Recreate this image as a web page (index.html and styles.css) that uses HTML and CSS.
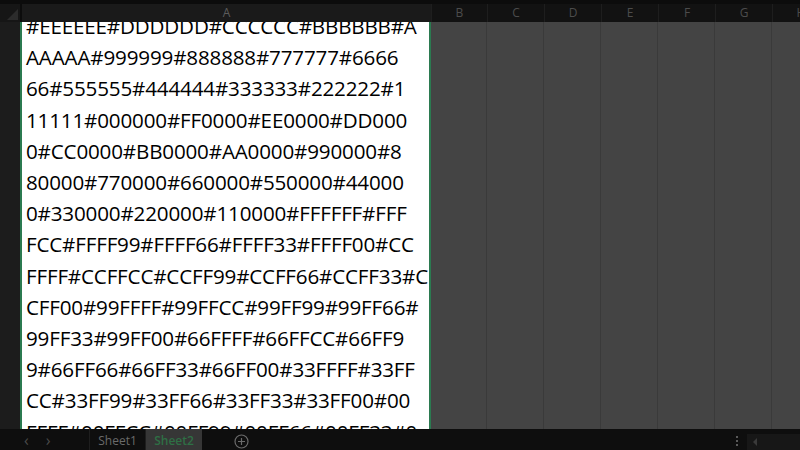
FILE: index.html
```html
<!DOCTYPE html>
<html>
<head>
    <title>Sheet2</title>
    <meta charset="utf-8"/>
    <link rel="stylesheet" href="styles.css">
</head>
<body>
    <div class="sheet">
        <div class="top-strip"></div>

        <div class="col-heads">
            <div class="corner"><span class="corner-tri"></span></div>
            <div class="col-head col-a">A</div>
            <div class="col-head">B</div>
            <div class="col-head">C</div>
            <div class="col-head">D</div>
            <div class="col-head">E</div>
            <div class="col-head">F</div>
            <div class="col-head">G</div>
            <div class="col-head">H</div>
        </div>

        <div class="grid-body">
            <div class="row-heads"></div>
            <div class="cell-a">
                <div class="cell-text">
                    <div class="line">#EEEEEE#DDDDDD#CCCCCC#BBBBBB#A</div>
                    <div class="line">AAAAA#999999#888888#777777#6666</div>
                    <div class="line">66#555555#444444#333333#222222#1</div>
                    <div class="line">11111#000000#FF0000#EE0000#DD000</div>
                    <div class="line">0#CC0000#BB0000#AA0000#990000#8</div>
                    <div class="line">80000#770000#660000#550000#44000</div>
                    <div class="line">0#330000#220000#110000#FFFFFF#FFF</div>
                    <div class="line">FCC#FFFF99#FFFF66#FFFF33#FFFF00#CC</div>
                    <div class="line">FFFF#CCFFCC#CCFF99#CCFF66#CCFF33#C</div>
                    <div class="line">CFF00#99FFFF#99FFCC#99FF99#99FF66#</div>
                    <div class="line">99FF33#99FF00#66FFFF#66FFCC#66FF9</div>
                    <div class="line">9#66FF66#66FF33#66FF00#33FFFF#33FF</div>
                    <div class="line">CC#33FF99#33FF66#33FF33#33FF00#00</div>
                    <div class="line">FFFF#00FFCC#00FF99#00FF66#00FF33#0</div>
                </div>
            </div>
            <div class="col-empty"></div>
            <div class="col-empty"></div>
            <div class="col-empty"></div>
            <div class="col-empty"></div>
            <div class="col-empty"></div>
            <div class="col-empty"></div>
            <div class="col-empty"></div>
        </div>

        <div class="tabbar">
            <div class="tab-nav">
                <span class="nav-arrow">&#8249;</span>
                <span class="nav-arrow">&#8250;</span>
            </div>
            <div class="tab">Sheet1</div>
            <div class="tab active">Sheet2</div>
            <div class="add-sheet">
                <svg width="15" height="15" viewBox="0 0 15 15">
                    <circle cx="7.5" cy="7.5" r="6.5" fill="none" stroke="#6a6a6a" stroke-width="1.2"/>
                    <path d="M7.5 4v7M4 7.5h7" stroke="#6a6a6a" stroke-width="1.2"/>
                </svg>
            </div>
            <div class="tab-space"></div>
            <div class="tab-dots"><i></i><i></i><i></i></div>
            <div class="hscroll"><span class="hs-arrow"></span></div>
        </div>
    </div>
</body>
</html>
```

FILE: styles.css
```css
body {
    margin: 0px;
    padding: 0px;
    background-color: #0e0e0e;
    font-family: "Open Sans", sans-serif;
}

.sheet {
    width: 800px;
    height: 450px;
    display: flex;
    flex-direction: column;
    overflow: hidden;
}

.top-strip {
    height: 4px;
    background-color: #0c0c0c;
}

/* column headers */
.col-heads, .grid-body {
    display: grid;
    grid-template-columns: 20px 411px 56px repeat(6, 57px);
    width: 830px;
}
.col-heads {
    height: 18px;
    background-color: #121212;
}
.corner {
    background-color: #161616;
    position: relative;
    border-right: 2px solid #0c0c0c;
    margin-right: -2px;
}
.corner-tri {
    position: absolute;
    right: 2px;
    bottom: 2px;
    width: 0;
    height: 0;
    border-left: 11px solid transparent;
    border-bottom: 11px solid #2c2c2c;
}
.col-head {
    font-size: 12px;
    line-height: 18px;
    text-align: center;
    color: #4c4c4c;
    border-left: 1px solid #1e1e1e;
}
.col-head.col-a {
    background-color: #1a1a1a;
    color: #5c5c5c;
    margin-left: 2px;
    border-left: 0px;
}

/* cells */
.grid-body {
    height: 407px;
}
.row-heads {
    background-color: #1c1c1c;
}
.cell-a {
    background-color: #fff;
    border-left: 2px solid #2b7a50;
    border-right: 2px solid #2b7a50;
    overflow: hidden;
}
.cell-text {
    margin-top: -11px;
    padding-left: 4px;
    font-family: "Open Sans", sans-serif;
    font-size: 20.6px;
    letter-spacing: -0.16px;
    line-height: 31.2px;
    color: #000;
}
.line {
    white-space: nowrap;
}
.col-empty {
    background-color: #444;
    border-right: 1px solid #3a3a3a;
}

/* sheet tabs */
.tabbar {
    height: 21px;
    background-color: #0e0e0e;
    display: flex;
    align-items: stretch;
    font-size: 12px;
}
.tab-nav {
    width: 90px;
    display: flex;
    align-items: center;
    padding-left: 24px;
    gap: 17px;
    box-sizing: border-box;
    border-right: 1px solid #1e1e1e;
}
.nav-arrow {
    color: #4a4a4a;
    font-size: 16px;
    line-height: 21px;
    padding-top: 2px;
}
.tab {
    width: 55px;
    text-align: center;
    line-height: 23px;
    color: #6a6a6a;
    border-right: 1px solid #1e1e1e;
}
.tab.active {
    width: 56px;
    background-color: #363636;
    color: #2f6f45;
    font-weight: 600;
    border-right: 0px;
}
.add-sheet {
    width: 78px;
    display: flex;
    align-items: center;
    justify-content: center;
    padding-top: 4px;
}
.tab-space {
    flex: 1;
}
.tab-dots {
    width: 12px;
    display: flex;
    flex-direction: column;
    align-items: center;
    justify-content: center;
    gap: 2px;
    padding-top: 3px;
    margin-right: 4px;
}
.tab-dots i {
    display: block;
    width: 2px;
    height: 2px;
    background-color: #5a5a5a;
}
.hscroll {
    width: 53px;
    margin-top: 5px;
    background-color: #171717;
    position: relative;
}
.hs-arrow {
    position: absolute;
    left: 6px;
    top: 4px;
    width: 0;
    height: 0;
    border-top: 4px solid transparent;
    border-bottom: 4px solid transparent;
    border-right: 4px solid #3a3a3a;
}
```
